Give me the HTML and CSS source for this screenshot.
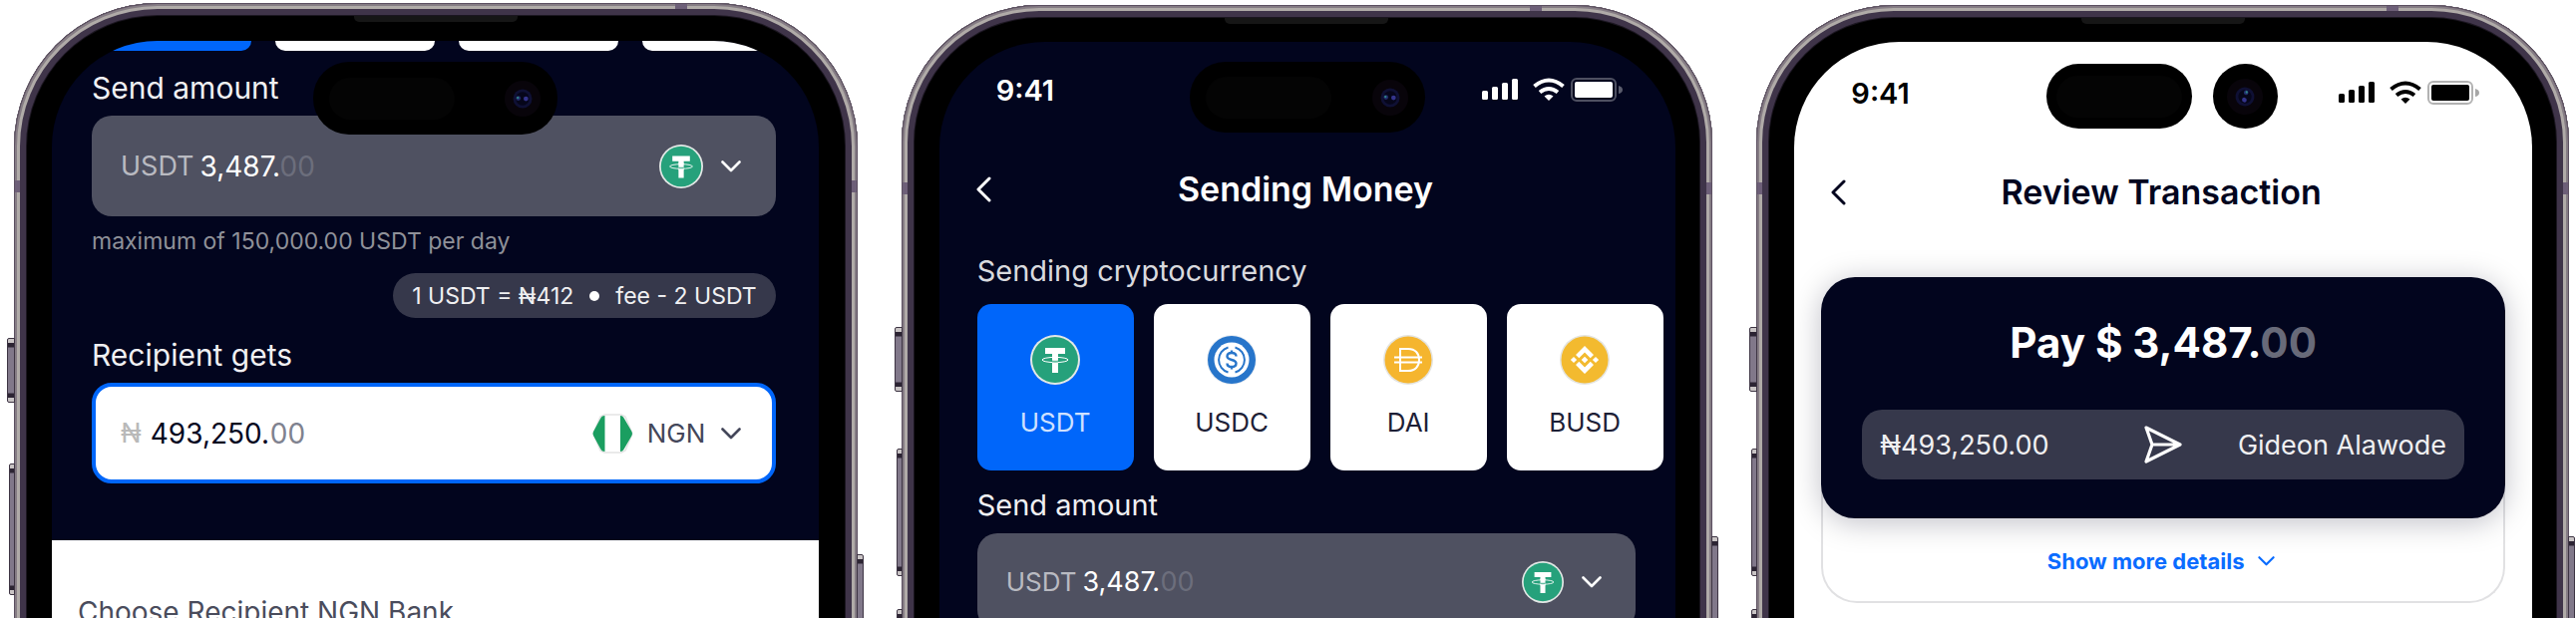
FILE: index.html
```html
<!DOCTYPE html>
<html lang="en">
<head>
<meta charset="utf-8">
<meta name="viewport" content="width=device-width, initial-scale=1">
<title>Send money</title>
<link rel="stylesheet" href="styles.css">
</head>
<body>
<svg class="defs" aria-hidden="true">
  <symbol id="tether" viewBox="0 0 50 50">
    <circle cx="25" cy="25" r="25" fill="#e3e8e6"/>
    <circle cx="25" cy="25" r="23" fill="#26a17b"/>
    <path d="M15 13h20v6h-7v3.500h-6V19h-7zM22 27h6v11h-6z" fill="#fff"/>
    <path d="M22 21h6v8h-6z" fill="#fff"/>
    <ellipse cx="25" cy="25" rx="13" ry="2.600" fill="none" stroke="#fff" stroke-width="1"/>
    <path d="M22 25.500q3 .6 6 0v2q-3 .3-6 0z" fill="#26a17b" opacity=".7"/>
  </symbol>
  <symbol id="usdc" viewBox="0 0 50 50">
    <circle cx="25" cy="25" r="25" fill="#e9edf2"/>
    <circle cx="25" cy="25" r="24" fill="#2775ca"/>
    <circle cx="25" cy="25" r="17.500" fill="#fff"/>
    <g fill="none" stroke="#2775ca" stroke-width="2">
      <path d="M21.500 12.500a13 13 0 0 0 0 25M28.500 12.500a13 13 0 0 1 0 25"/>
      <path d="M29.500 21.500c0-2.500-2-3.500-4.500-3.500s-4.500 1.200-4.500 3.500c0 4.500 9 2.500 9 7 0 2.300-2 3.500-4.500 3.500s-4.500-1.200-4.500-3.500M25 15.500V18M25 32v2.500" stroke-width="2.400"/>
    </g>
  </symbol>
  <symbol id="dai" viewBox="0 0 50 50">
    <circle cx="25" cy="25" r="25" fill="#e4e4e0"/>
    <circle cx="25" cy="25" r="23.500" fill="#f5b52e"/>
    <path d="M17 14h8c7 0 11 4.500 11 11s-4 11-11 11h-8zM11 22.500h28M11 27.500h28" fill="none" stroke="#fff" stroke-width="2"/>
  </symbol>
  <symbol id="busd" viewBox="0 0 50 50">
    <circle cx="25" cy="25" r="25" fill="#e4e4e0"/>
    <circle cx="25" cy="25" r="23.500" fill="#f3ba2f"/>
    <path d="M25 11l9 9-3.300 3.300L25 17.600l-5.700 5.700L16 20zM25 39l9-9-3.300-3.300L25 32.400l-5.700-5.700L16 30zM14 21.900l3.100 3.100-3.100 3.100-3.100-3.100zM36 21.900l3.100 3.100-3.100 3.100-3.100-3.100zM25 21.700l3.300 3.300-3.300 3.300-3.300-3.300z" fill="#fff"/>
  </symbol>
  <symbol id="nigeria" viewBox="0 0 42 40">
    <path d="M13 1h17l4 2 7 17-7 17-4 2H13l-4-2L2 20 9 3z" fill="#fff" stroke="#e4e4e4" stroke-width="1.500"/>
    <path d="M13.500 2v36C11 38 10 37 9 35L2 22q-1-2 0-4L9 5c1-2 2-3 4.500-3zM29 2v36c2 0 3-1 4-3l7.500-13q1-2 0-4L33 5c-1-2-2-3-4-3z" fill="#1a9e60"/>
  </symbol>
  <symbol id="down" viewBox="0 0 20 12">
    <path d="M1.500 1.500L10 10l8.500-8.500" fill="none" stroke="currentColor" stroke-width="2.600" stroke-linecap="round" stroke-linejoin="round"/>
  </symbol>
  <symbol id="back" viewBox="0 0 16 26">
    <path d="M14 2L3 13l11 11" fill="none" stroke="currentColor" stroke-width="3" stroke-linecap="round" stroke-linejoin="round"/>
  </symbol>
  <symbol id="plane" viewBox="0 0 38 38">
    <path d="M2 2l34 17L2 36l6-17zM8 19h28" fill="none" stroke="currentColor" stroke-width="3.200" stroke-linejoin="round"/>
  </symbol>
  <symbol id="signals" viewBox="0 0 144 26">
    <g fill="currentColor">
      <rect x="0" y="13" width="6" height="9" rx="1.500"/>
      <rect x="10" y="9" width="6" height="13" rx="1.500"/>
      <rect x="20" y="5" width="6" height="17" rx="1.500"/>
      <rect x="30" y="1" width="6" height="21" rx="1.500"/>
      <path d="M67 23l-4.500-4.500q4.500-3.500 9 0z"/>
      <rect x="93" y="4" width="38" height="16" rx="2"/>
      <path d="M137 8q4 1 4 4t-4 4z" opacity=".35"/>
    </g>
    <g fill="none" stroke="currentColor">
      <path d="M52.500 8.500q14.500-12 29 0" stroke-width="4"/>
      <path d="M58 14.500q9-7 18 0" stroke-width="4"/>
      <rect x="90" y="1" width="44" height="22" rx="5" stroke-width="2" opacity=".3"/>
    </g>
  </symbol>
  <symbol id="lens" viewBox="0 0 40 40">
    <circle cx="20" cy="20" r="19" fill="#08040a"/>
    <circle cx="20" cy="20" r="10" fill="#0f1034"/>
    <circle cx="20" cy="20" r="7" fill="#06061a"/>
    <circle cx="15.500" cy="19.500" r="2.500" fill="#222d6c"/>
    <circle cx="23.500" cy="20" r="2.500" fill="#34348c"/>
    <circle cx="15" cy="19" r="1.200" fill="#2f8a86"/>
  </symbol>
</svg>

<main class="phones">
  <section class="phone phone-large">
    <i class="key key-mute"></i><i class="key key-up"></i><i class="key key-power"></i>
    <i class="band band-top"></i><i class="band band-left"></i><i class="band band-right"></i>
    <i class="slit"></i>
    <div class="island"><i class="sensor"></i><svg class="lens"><use href="#lens"/></svg></div>
    <div class="screen dark">
      <div class="strip"><i class="on"></i><i></i><i></i><i></i></div>
      <div class="form">
        <label class="label" for="send1">Send amount</label>
        <div class="field">
          <span class="unit">USDT</span><input id="send1" class="amount" value="3,487."><span class="cents">00</span>
          <button class="picker" type="button" aria-label="Choose cryptocurrency">
            <svg class="coin"><use href="#tether"/></svg><svg class="down"><use href="#down"/></svg>
          </button>
        </div>
        <p class="note">maximum of 150,000.00 USDT per day</p>
        <p class="rate"><span>1 USDT = ₦412</span><i></i><span>fee - 2 USDT</span></p>
        <label class="label" for="get">Recipient gets</label>
        <div class="field field-active">
          <span class="unit">₦</span><input id="get" class="amount amount-wide" value="493,250."><span class="cents">00</span>
          <div class="picker">
            <svg class="flag"><use href="#nigeria"/></svg>
            <select class="currency" aria-label="Currency"><option>NGN</option></select>
            <svg class="down"><use href="#down"/></svg>
          </div>
        </div>
      </div>
      <div class="bank">Choose Recipient NGN Bank</div>
    </div>
  </section>

  <section class="phone">
    <i class="key key-mute"></i><i class="key key-up"></i><i class="key key-down"></i><i class="key key-power"></i>
    <i class="band band-top"></i><i class="band band-left"></i><i class="band band-right"></i>
    <i class="slit"></i>
    <div class="island"><i class="sensor"></i><svg class="lens"><use href="#lens"/></svg></div>
    <div class="screen dark">
      <div class="status"><time>9:41</time><svg class="signals"><use href="#signals"/></svg></div>
      <header class="bar">
        <button class="back" type="button" aria-label="Back"><svg><use href="#back"/></svg></button>
        <h1>Sending Money</h1>
      </header>
      <div class="form">
        <p class="label label-soft">Sending cryptocurrency</p>
        <div class="coins">
          <button class="card card-on" type="button"><svg><use href="#tether"/></svg>USDT</button>
          <button class="card" type="button"><svg><use href="#usdc"/></svg>USDC</button>
          <button class="card" type="button"><svg><use href="#dai"/></svg>DAI</button>
          <button class="card" type="button"><svg><use href="#busd"/></svg>BUSD</button>
        </div>
        <label class="label" for="send2">Send amount</label>
        <div class="field">
          <span class="unit">USDT</span><input id="send2" class="amount" value="3,487."><span class="cents">00</span>
          <button class="picker" type="button" aria-label="Choose cryptocurrency">
            <svg class="coin"><use href="#tether"/></svg><svg class="down"><use href="#down"/></svg>
          </button>
        </div>
      </div>
    </div>
  </section>

  <section class="phone">
    <i class="key key-mute"></i><i class="key key-up"></i><i class="key key-down"></i><i class="key key-power"></i>
    <i class="band band-top"></i><i class="band band-left"></i><i class="band band-right"></i>
    <i class="slit"></i>
    <div class="holes"><div class="hole"><i class="sensor"></i></div><div class="hole hole-round"><svg class="lens"><use href="#lens"/></svg></div></div>
    <div class="screen light">
      <div class="status"><time>9:41</time><svg class="signals"><use href="#signals"/></svg></div>
      <header class="bar">
        <button class="back" type="button" aria-label="Back"><svg><use href="#back"/></svg></button>
        <h1>Review Transaction</h1>
      </header>
      <div class="review">
        <div class="summary">
          <h2>Pay $ 3,487.<span>00</span></h2>
          <div class="transfer"><span>₦493,250.00</span><svg class="plane"><use href="#plane"/></svg><span class="payee">Gideon Alawode</span></div>
        </div>
        <button class="more" type="button">Show more details<svg><use href="#down"/></svg></button>
      </div>
    </div>
  </section>
</main>
</body>
</html>
```

FILE: styles.css
```css
* { box-sizing: border-box; }

body {
  margin: 0;
  height: 100vh;
  overflow: hidden;
  background: #fff;
  color: #02051e;
  font-family: Inter, "Liberation Sans", sans-serif;
}

h1, h2, p { margin: 0; }
i { display: block; }
svg { display: block; flex: none; }

button, input, select {
  margin: 0;
  padding: 0;
  border: 0;
  background: none;
  color: inherit;
  font: inherit;
}

.defs { position: absolute; width: 0; height: 0; }

.phones {
  display: grid;
  grid-template-columns: 846fr 814fr 815fr;
  gap: 44px;
  height: 100%;
  padding: 5px 7px 0 14px;
}

/* Handset */
.phone {
  --text: 27px;
  --small: 26px;
  --label: 29px;
  --field: 97px;
  --field-end: 34px;
  --coin: 42px;
  --amount: 78px;
  --side: 38px;
  --key: 323px;
  position: relative;
  min-width: 0;
  padding: 37px 37px 0 38px;
  border-radius: 138px 138px 0 0;
  background: #000;
  box-shadow:
    inset 0 1px 0 #5b4f60,
    inset 1px 0 0 #5b4f60,
    inset -1px 0 0 #5b4f60,
    inset 0 0 0 3px #857c84,
    inset 0 0 0 6px #b0aba8,
    inset 0 0 0 12px #3f3449,
    inset 0 0 0 13px #1b1620;
}

.phone-large {
  --text: 28px;
  --small: 27px;
  --label: 30px;
  --field: 101px;
  --field-end: 35px;
  --coin: 44px;
  --amount: 80px;
  --side: 40px;
  --key: 336px;
  margin-top: -2px;
  padding: 38px 39px 0 38px;
  border-radius: 144px 144px 0 0;
}

.key {
  position: absolute;
  left: -7px;
  width: 8px;
  border: 1px solid #3d3443;
  border-radius: 2px 0 0 2px;
  background: linear-gradient(#c9c4c5 4px, #2c2433 4px 8px, #81788a 9px calc(100% - 9px), #2c2433 calc(100% - 8px) calc(100% - 4px), #c9c4c5 calc(100% - 4px));
}
.key-mute { top: var(--key); height: 65px; }
.key-up { top: 445px; left: -5px; width: 6px; height: 128px; }
.key-down { top: 606px; left: -5px; width: 6px; height: 128px; }
.key-power { top: 533px; right: -6px; left: auto; width: 7px; height: 200px; border-radius: 0 2px 2px 0; }
.phone-large .key-up { top: 462px; height: 132px; }
.phone-large .key-power { top: 553px; }

.band { position: absolute; background: #6d5f78; }
.band-top { top: 1px; right: 171px; width: 12px; height: 5px; }
.band-left { top: 178px; left: 1px; width: 5px; height: 12px; }
.band-right { top: 178px; right: 1px; width: 5px; height: 12px; }

.slit {
  position: absolute;
  top: 13px;
  left: 50%;
  width: 164px;
  height: 6px;
  margin-left: -82px;
  border-radius: 0 0 5px 5px;
  background: #161616;
}

.island, .holes {
  position: absolute;
  z-index: 2;
  left: 50%;
  display: flex;
  align-items: center;
}
.island {
  top: 57px;
  width: 236px;
  height: 71px;
  margin-left: -117px;
  padding: 0 16px;
  justify-content: space-between;
  border-radius: 36px;
  background: #000;
}
.phone-large .island { top: 59px; width: 245px; height: 73px; margin-left: -123px; }
.sensor { width: 126px; height: 42px; border-radius: 21px; background: #040404; }
.lens { width: 38px; height: 38px; }

.holes { top: 59px; margin-left: -117px; gap: 21px; }
.hole {
  display: flex;
  align-items: center;
  justify-content: center;
  width: 146px;
  height: 65px;
  border-radius: 33px;
  background: #000;
}
.hole-round { width: 65px; }
.hole-round .lens { transform: rotate(100deg); }

.screen {
  height: 100%;
  overflow: hidden;
  border-radius: 106px 106px 0 0;
  font-size: var(--text);
}
.dark { background: #02051e; color: #fff; }
.light { background: #fff; }

/* Status and title bars */
.status {
  display: flex;
  align-items: center;
  justify-content: space-between;
  height: 40px;
  margin-top: 29px;
  padding: 0 50px 0 57px;
}
.status time { font-size: 29px; font-weight: 600; line-height: 40px; }
.signals { width: 144px; height: 26px; }
.light .status { margin-top: 32px; color: #000; }

.bar {
  display: grid;
  grid-template-columns: 30px 1fr 30px;
  align-items: center;
  margin-top: 55px;
  padding: 0 40px 0 36px;
}
.bar h1 { font-size: 34px; font-weight: 600; line-height: 48px; text-align: center; }
.back svg { width: 16px; height: 26px; }

/* Send form */
.form { padding: 0 40px 0 var(--side); }
.phone-large .form { padding: 17px 43px 57px 40px; }

.strip { display: flex; gap: 24px; padding-left: 40px; }
.strip i { flex: none; width: 160px; height: 10px; border-radius: 0 0 12px 12px; background: #fff; }
.strip .on { background: #0066fa; }

.label { display: block; color: #f0f0f2; font-size: var(--label); line-height: 40px; }
.label-soft { margin-top: 38px; color: #d9dade; }

.field {
  display: flex;
  align-items: center;
  height: var(--field);
  margin-top: 8px;
  padding: 0 var(--field-end) 0 29px;
  border-radius: 20px;
  background: #4f5161;
}
.unit { margin-right: 6px; color: #b9bac1; font-size: var(--small); }
.amount { width: var(--amount); outline: 0; }
.cents { color: #6c6e7c; }
.field-active {
  padding: 0 31px 0 25px;
  border: 4px solid #0066fa;
  background: #fff;
  color: #02051e;
}
.field-active .unit { margin-right: 9px; color: #b9b9b9; }
.field-active .cents { color: #7f828f; }
.amount-wide { width: 120px; }

.picker { display: flex; align-items: center; margin-left: auto; color: #fff; }
.coin { width: var(--coin); height: var(--coin); margin-right: 18px; }
.down { width: 20px; height: 12px; }
.flag { width: 42px; height: 40px; margin-right: 14px; }
.currency { width: 74px; appearance: none; font-size: 26px; }
.field-active .picker { color: #44475a; }

.note { margin-top: 9px; color: #8f9199; font-size: 23px; line-height: 32px; }
.rate {
  display: flex;
  align-items: center;
  gap: 16px;
  width: fit-content;
  height: 45px;
  margin: 16px 0 17px auto;
  padding: 0 19px;
  border-radius: 23px;
  background: #36384b;
  color: #f0f0f2;
  font-size: 23px;
}
.rate i { width: 10px; height: 10px; border-radius: 50%; background: #fff; }

.bank { height: 400px; padding: 52px 26px; background: #fff; color: #4a4c5c; line-height: 40px; }

.coins { display: flex; gap: 20px; margin: 13px 0 15px; }
.card {
  display: flex;
  flex: none;
  flex-direction: column;
  align-items: center;
  gap: 20px;
  width: 157px;
  height: 167px;
  padding: 31px 0;
  border-radius: 14px;
  background: #fff;
  color: #1d2036;
  font-size: var(--small);
  line-height: 36px;
}
.card svg { width: 50px; height: 50px; }
.card-on { background: #0066fa; color: #cfe1ff; }

/* Review */
.review {
  margin: 61px 27px 0;
  border: 2px solid #e1e1e3;
  border-top: 0;
  border-radius: 36px;
}
.summary {
  margin: 0 -2px;
  padding: 36px 41px 39px;
  border-radius: 34px;
  background: #02051e;
  box-shadow: 0 4px 30px rgb(2 5 30 / 25%);
  color: #fff;
}
.summary h2 { font-size: 42px; font-weight: 700; line-height: 60px; text-align: center; }
.summary h2 span { color: #686a79; }
.transfer {
  display: grid;
  grid-template-columns: 1fr auto 1fr;
  align-items: center;
  height: 70px;
  margin-top: 37px;
  padding: 0 18px;
  border-radius: 20px;
  background: #36384b;
  color: #f0f0f2;
}
.plane { width: 38px; height: 38px; color: #fff; }
.payee { text-align: right; }
.more {
  display: flex;
  align-items: center;
  justify-content: center;
  gap: 14px;
  width: 100%;
  padding: 27px 4px 24px 0;
  color: #0a6cff;
  font-size: 22px;
  font-weight: 700;
  line-height: 32px;
}
.more svg { width: 17px; height: 10px; }
```
